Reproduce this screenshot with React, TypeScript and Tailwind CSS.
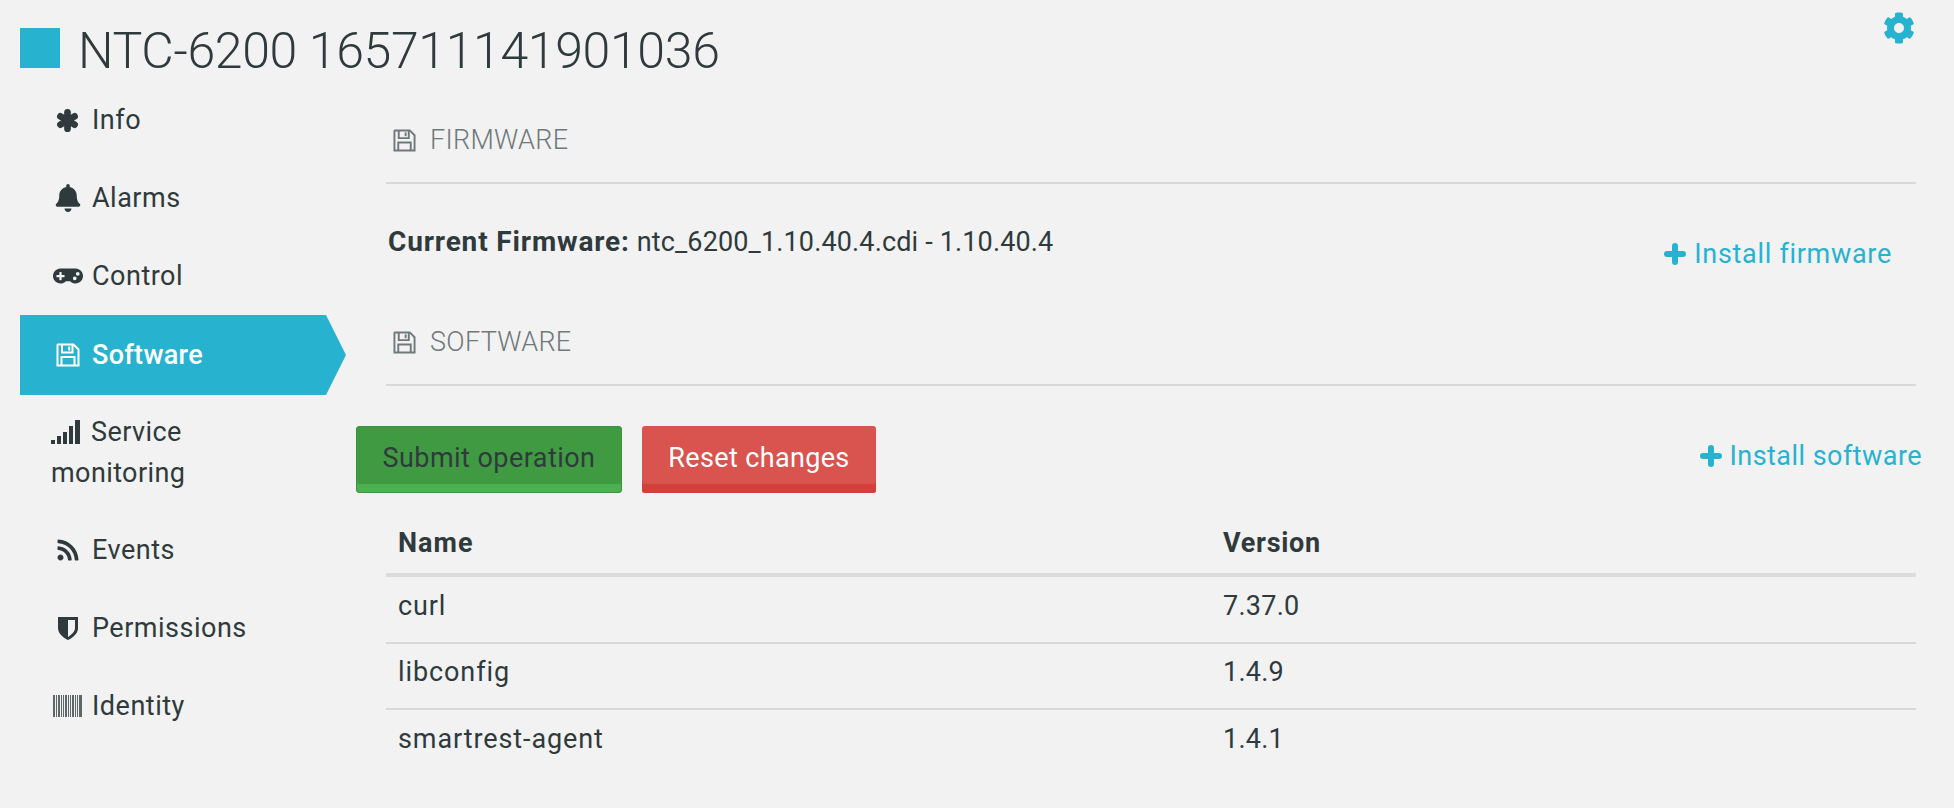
import React from "react";
import { FaBell, FaGamepad, FaRss, FaCog } from "react-icons/fa";

const SaveIcon = ({ className }: { className?: string }) => (
  <svg viewBox="0 0 24 24" className={className} fill="none" stroke="currentColor" strokeWidth="2">
    <path d="M2 1.5 H17.5 L22.5 6.5 V22.5 H1.5 V2 Z" />
    <path d="M6 1.5 V9.5 H16.5 V1.5" />
    <path d="M13.2 3.5 V7.5" />
    <path d="M5.5 22.5 V14 H18.5 V22.5" />
  </svg>
);
const Asterisk = () => (
  <svg viewBox="0 0 24 24" className="w-[23px] h-[23px]" stroke="currentColor" strokeWidth="7" strokeLinecap="round">
    <path d="M12 3.5 V20.5" />
    <path d="M4.6 7.7 L19.4 16.3" />
    <path d="M19.4 7.7 L4.6 16.3" />
  </svg>
);
const Plus = () => (
  <svg viewBox="0 0 22 22" className="w-[22px] h-[22px] mr-[8px]" fill="none" stroke="currentColor" strokeWidth="6" strokeLinecap="round">
    <path d="M11 3 V19 M3 11 H19" />
  </svg>
);
const Signal = () => (
  <svg viewBox="0 0 29 24" className="inline-block w-[29px] h-[24px] fill-current align-[-3px] mr-[11px]">
    <rect x="0" y="20" width="4" height="4" />
    <rect x="6" y="16" width="4" height="8" />
    <rect x="12" y="12" width="4" height="12" />
    <rect x="18" y="6" width="4" height="18" />
    <rect x="24" y="0" width="5" height="24" />
  </svg>
);
const Shield = () => (
  <svg viewBox="0 0 20 24" className="w-[20px] h-[24px]">
    <path fill="currentColor" fillRule="evenodd" d="M0 1 L20 1 L20 12 C20 18 14 22 10 24 C6 22 0 18 0 12 Z M10 4 L10 21 C13 19 17 16 17 12 L17 4 Z" />
  </svg>
);
const Barcode = () => {
  const bars = [[0,2],[3,1],[5,2],[8,1],[10,1],[12,2],[15,1],[17,1],[19,2],[22,1],[24,1],[26,3]];
  return (
    <svg viewBox="0 0 29 22" className="w-[29px] h-[22px]">
      {bars.map(([x, w]) => <rect key={x} x={x} y="0" width={w} height="22" fill="#5f6668" />)}
    </svg>
  );
};

const items: { label: string; icon: React.ReactNode; active?: boolean }[] = [
  { label: "Info", icon: <Asterisk /> },
  { label: "Alarms", icon: <FaBell className="w-[26px] h-[28px]" /> },
  { label: "Control", icon: <FaGamepad className="w-[30px] h-[30px]" /> },
  { label: "Software", icon: <SaveIcon className="w-[24px] h-[24px]" />, active: true },
  { label: "Events", icon: <FaRss className="w-[24px] h-[24px]" /> },
  { label: "Permissions", icon: <Shield /> },
  { label: "Identity", icon: <Barcode /> },
];

function NavItem({ label, icon, active }: { label: string; icon: React.ReactNode; active?: boolean }) {
  return (
    <div
      className={
        active
          ? "h-[80px] w-[306px] bg-[#27b3d0] text-white font-medium relative flex items-center pl-[32px] -mb-[1px] tracking-[0.3px]"
          : "h-[78px] flex items-center pl-[32px] text-[#2f3a3c] tracking-[0.5px]"
      }
    >
      <span className="w-[31px] mr-[9px] flex justify-center shrink-0">{icon}</span>
      <span>{label}</span>
      {active && (
        <span className="absolute left-full top-0 w-0 h-0 border-y-[40px] border-y-transparent border-l-[20px] border-l-[#27b3d0]" />
      )}
    </div>
  );
}

function SectionTitle({ children }: { children: string }) {
  return (
    <div className="h-[79px] pb-[7px] flex items-center pl-[7px] border-b-2 border-[#d9d9d9] text-[#6f797a] font-light text-[27px] tracking-[0.3px]">
      <SaveIcon className="w-[23px] h-[23px] mr-[14px]" />
      {children}
    </div>
  );
}

function Row({ name, version, last }: { name: string; version: string; last?: boolean }) {
  return (
    <div className={"h-[66px] pb-[8px] flex items-center pl-[12px] text-[#2f3a3c] text-[27px] " + (last ? "" : "border-b-2 border-[#d9d9d9]")}>
      <span className="w-[825px] tracking-[0.9px]">{name}</span>
      <span className="tracking-[0.25px]">{version}</span>
    </div>
  );
}

export default function App() {
  return (
    <div className="w-[1954px] h-[808px] bg-[#f2f2f2] overflow-hidden relative font-['Roboto',sans-serif]">
      <FaCog className="absolute left-[1883px] top-[12px] w-[32px] h-[32px] text-[#27b3d0]" />
      <div className="flex items-center h-[40px] mt-[28px] pl-[20px] text-[#2f3a3c]">
        <span className="w-[40px] h-[40px] bg-[#27b3d0] mr-[18px]" />
        <span className="font-light text-[50px] tracking-[-0.35px] leading-none pt-[5px]">NTC-6200 165711141901036</span>
      </div>
      <div className="flex mt-[13px]">
        <nav className="w-[356px] shrink-0 pl-[20px] text-[27px]">
          {items.slice(0, 4).map((i) => <NavItem key={i.label} {...i} />)}
          <div className="pl-[31px] pr-[60px] pt-[18px] pb-[17px] leading-[41px] text-[#2f3a3c] tracking-[0.4px]">
            <Signal />Service monitoring
          </div>
          {items.slice(4).map((i) => <NavItem key={i.label} {...i} />)}
        </nav>
        <main className="w-[1560px] mt-[24px]">
          <div className="pl-[30px]">
            <SectionTitle>FIRMWARE</SectionTitle>
            <div className="h-[123px] flex items-start justify-between pl-[2px] pr-[24px] text-[#2f3a3c] text-[27px]">
              <div className="mt-[43px] leading-[30px] tracking-[0.15px]"><b className="font-bold text-[28px] tracking-[0.85px]">Current Firmware:</b> ntc_6200_1.10.40.4.cdi - 1.10.40.4</div>
              <div className="mt-[55px] flex items-center text-[#27b3d0] leading-[30px] tracking-[0.7px]"><Plus />Install firmware</div>
            </div>
            <SectionTitle>SOFTWARE</SectionTitle>
          </div>
          <div className="flex items-start mt-[40px] relative">
            <button className="w-[266px] h-[67px] rounded-[3px] bg-[#409a42] border border-[#3c9440] text-[#2f3a3c] text-[27px] tracking-[0.45px] pb-[2px] shadow-[inset_0_-8px_0_#4caf50,inset_0_-9px_0_#409a42]">Submit operation</button>
            <button className="w-[234px] h-[67px] rounded-[3px] bg-[#d9534f] text-white text-[27px] tracking-[0.35px] ml-[20px] pb-[2px] shadow-[inset_0_-9px_0_#d43f3a]">Reset changes</button>
            <div className="ml-auto -mr-[6px] flex items-center text-[#27b3d0] text-[27px] leading-[30px] mt-[15px] tracking-[0.45px]"><Plus />Install software</div>
          </div>
          <div className="ml-[30px] mt-[19px]">
            <div className="h-[65px] pt-[1px] mb-[1px] flex items-center pl-[12px] text-[#2f3a3c] font-bold text-[27px] border-b-4 border-[#dcdcdc]">
              <span className="w-[825px] tracking-[1px]">Name</span>
              <span className="tracking-[0.7px]">Version</span>
            </div>
            <Row name="curl" version="7.37.0" />
            <Row name="libconfig" version="1.4.9" />
            <Row name="smartrest-agent" version="1.4.1" last />
          </div>
        </main>
      </div>
    </div>
  );
}
